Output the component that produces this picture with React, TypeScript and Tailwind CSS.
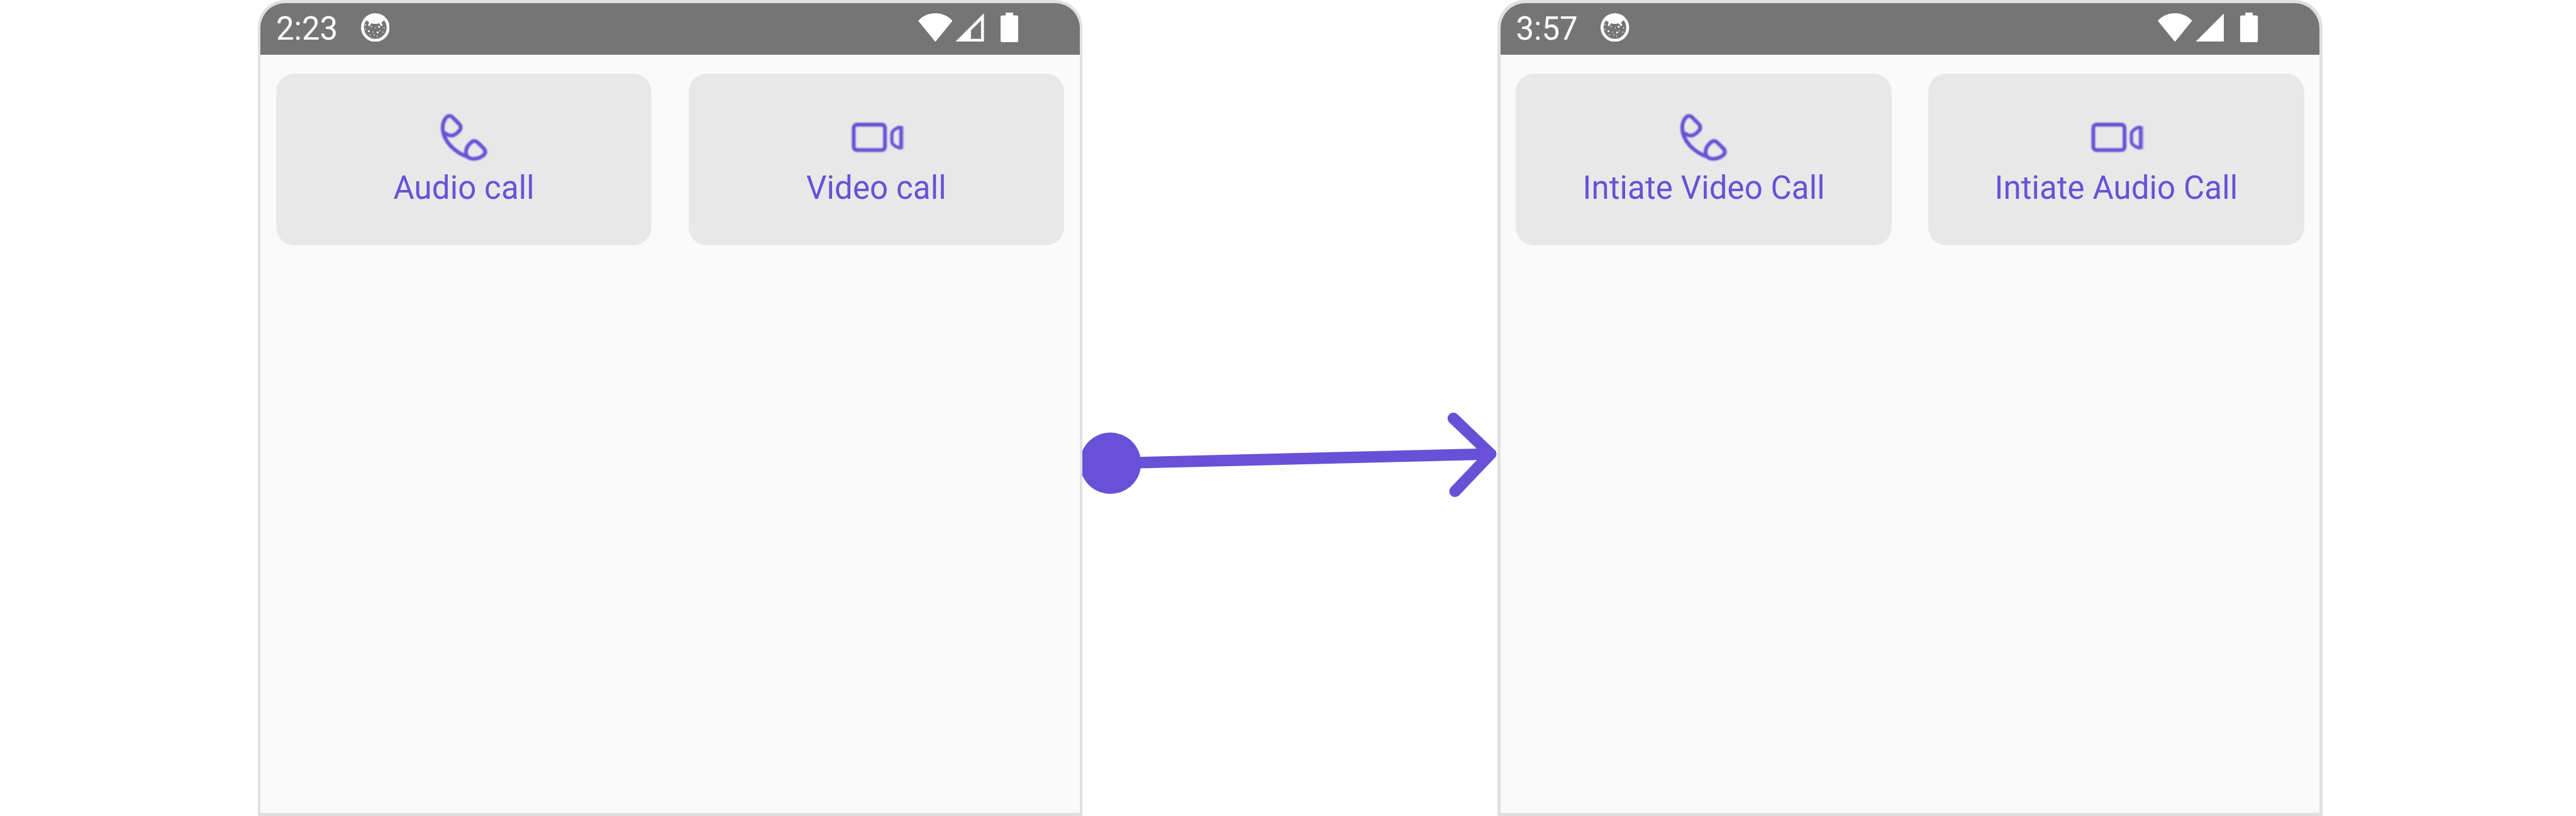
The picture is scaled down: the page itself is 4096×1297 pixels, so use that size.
import React from "react";

function MascotIcon() {
  return (
    <svg viewBox="0 0 50 50" className="mt-[16.4px] size-[45.5px] shrink-0" fill="#fff">
      <circle cx="25" cy="25" r="22.4" fill="none" stroke="#fff" strokeWidth="5.2" />
      <path d="M7 10 Q14 1 25 1 Q36 1 43 10 L39.8 12.6 L35.5 16.6 L38 20.5 L36 22.4 L34.4 21.4 L32 17.6 Q25 19.8 18 17.6 L15.8 21.6 L13.8 22.8 L12.4 20.8 L14.4 16.6 L10.2 12.6 Z" />
      <rect x="7" y="19.4" width="2" height="2" opacity=".8" />
      <rect x="7" y="27" width="2" height="2" opacity=".8" />
      <rect x="12.2" y="30" width="3" height="3" />
      <rect x="17.4" y="22.4" width="2" height="2" opacity=".8" />
      <rect x="24.8" y="24.8" width="1.6" height="1.6" />
      <rect x="30" y="22.2" width="3" height="3" />
      <rect x="39.4" y="24.8" width="1.8" height="1.8" />
      <rect x="32.2" y="29.8" width="1.6" height="1.6" opacity=".9" />
      <rect x="27.4" y="32.2" width="3" height="3" />
      <rect x="37.4" y="32.2" width="1.8" height="1.8" opacity=".8" />
      <rect x="20" y="32.2" width="1.8" height="1.8" opacity=".8" />
      <rect x="15" y="37" width="1.8" height="1.8" opacity=".8" />
      <rect x="22.2" y="37" width="2" height="2" opacity=".8" />
      <rect x="27.4" y="39.6" width="1.6" height="1.6" opacity=".9" />
    </svg>
  );
}

function WifiIcon() {
  return (
    <svg viewBox="0 0 60 50" className="h-[45.5px] w-[54.6px] shrink-0" fill="#fff">
      <path d="M0 13.3 C8 4.5 18.5 0 30 0 C41.5 0 52 4.5 60 13.3 L30 50 Z" />
    </svg>
  );
}

function SignalIcon({ full }: { full: boolean }) {
  return (
    <svg viewBox="0 0 50 50" className="ml-[4.6px] size-[45.5px] shrink-0" fill="#fff">
      <path
        fillRule="evenodd"
        d={full ? "M0 50 L50 0 V50 Z" : "M0 50 L50 0 V50 Z M27.3 30 V44.9 H45 V12.5 Z"}
      />
    </svg>
  );
}

function BatteryIcon() {
  return (
    <svg viewBox="0 0 31 52" className="-mt-[0.9px] ml-[26.4px] h-[47.4px] w-[28.2px] shrink-0" fill="#fff">
      <rect x="9" y="0" width="13" height="8" />
      <rect x="0" y="5" width="31" height="47" rx="3" />
    </svg>
  );
}

function PhoneIcon() {
  return (
    <svg
      viewBox="0 0 96 96"
      className="size-[87.4px] shrink-0 blur-[1.1px]"
      fill="none"
      stroke="#6851D6"
      strokeWidth="6.6"
      strokeLinecap="round"
      strokeLinejoin="round"
    >
      <path d="M53.5 81 C44 78 33 71 24.7 62.5 C16.5 53.5 11 42.5 10.8 31.5 C10.8 23 14 16 18 12 C20.5 9.5 25 9.5 28 12.5 L40 24.5 C43 27.5 43 33 40 36 C35.5 41 31 44.7 26 44.5 C22.5 44.3 19 43.5 15 40.5" />
      <path d="M53.5 81 C50 74 51.5 66 57 60 C60 56.5 62.5 54 66 53.8 C69 53.8 70.5 55 72.5 57 L82.5 67 C86.5 71 86 76 82 79 C77 83 70 85.5 63 85 C59.5 84.7 56 83.5 53.5 81" />
    </svg>
  );
}

function VideoIcon() {
  return (
    <svg
      viewBox="0 0 96 96"
      className="size-[87.4px] shrink-0 blur-[1.1px]"
      fill="none"
      stroke="#6851D6"
      strokeWidth="6.6"
      strokeLinejoin="round"
    >
      <rect x="8.2" y="25.4" width="54.6" height="44.4" rx="5.5" />
      <path
        strokeWidth="5.6"
        d="M90.6 30.2 H87 C80.5 32.4 74.8 36.8 74.8 42 V54 C74.8 59.2 80.5 63.6 87 65.8 H90.6 Z"
      />
      <rect x="93" y="28" width="3" height="40" fill="#6851D6" stroke="none" opacity=".5" />
    </svg>
  );
}

function CallButton({ label, icon }: { label: string; icon: React.ReactNode }) {
  return (
    <button className="flex h-[273.2px] w-[597.4px] shrink-0 flex-col items-center rounded-[29.1px] bg-[#e8e8e8] pt-[58.3px]">
      {icon}
      <span className="mt-[7px] text-[51px] leading-[60px] tracking-[0.1px] whitespace-nowrap text-[#6851D6]">
        {label}
      </span>
    </button>
  );
}

function Phone({ time, fullSignal, labels }: { time: string; fullSignal: boolean; labels: [string, string] }) {
  return (
    <div className="h-[1297px] w-[1311.3px] shrink-0 rounded-t-[43.7px] bg-[#e0e0e0] p-[4.55px]">
      <div className="flex h-full flex-col overflow-hidden rounded-t-[39.2px] bg-[#fafafa]">
        <div className="flex h-[82.9px] shrink-0 items-start bg-[#757575] pr-[97.4px] pl-[24.6px] text-white">
          <span className="w-[134.8px] shrink-0 text-[51px] leading-[82.9px]">{time}</span>
          <MascotIcon />
          <div className="mt-[16.4px] ml-auto flex items-start">
            <WifiIcon />
            <SignalIcon full={fullSignal} />
            <BatteryIcon />
          </div>
        </div>
        <div className="flex gap-[58.3px] pt-[29.1px] pl-[24.6px]">
          <CallButton label={labels[0]} icon={<PhoneIcon />} />
          <CallButton label={labels[1]} icon={<VideoIcon />} />
        </div>
      </div>
    </div>
  );
}

function FlowArrow() {
  return (
    <svg
      viewBox="0 720 725 150"
      className="mt-[655.6px] h-[136.6px] w-[660.2px] shrink-0 overflow-hidden"
      fill="none"
      stroke="#6851D6"
      strokeWidth="20"
      strokeLinecap="round"
      strokeLinejoin="round"
    >
      <circle cx="49" cy="808.2" r="53.5" fill="#6851D6" stroke="none" />
      <path d="M49 808.4 L713 792" />
      <path d="M647.7 729.8 L713 792 L650.7 857.2" />
    </svg>
  );
}

export default function App() {
  return (
    <div className="flex h-[1297px] w-[4096px] items-start overflow-hidden bg-white pl-[409.8px] font-[Roboto,sans-serif]">
      <Phone time="2:23" fullSignal={false} labels={["Audio call", "Video call"]} />
      <FlowArrow />
      <Phone time="3:57" fullSignal={true} labels={["Intiate Video Call", "Intiate Audio Call"]} />
    </div>
  );
}
